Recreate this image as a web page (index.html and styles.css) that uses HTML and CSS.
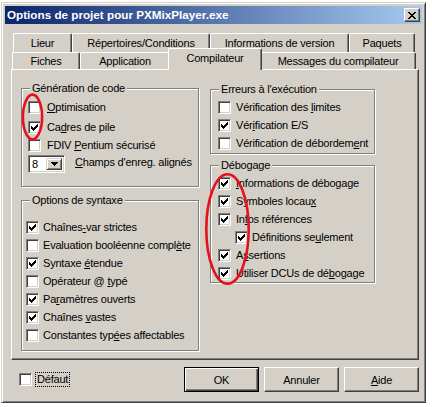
FILE: index.html
```html
<!DOCTYPE html>
<html lang="fr">
<head>
<meta charset="utf-8">
<title>Options de projet</title>
<link rel="stylesheet" href="styles.css">
</head>
<body>
<div class="window">
  <div class="titlebar">
    <span class="title">Options de projet pour PXMixPlayer.exe</span>
    <span class="close"><svg width="8" height="7" viewBox="0 0 8 7" shape-rendering="crispEdges"><path d="M0 0h2v1h-2zM6 0h2v1h-2zM1 1h2v1h-2zM5 1h2v1h-2zM2 2h4v1h-4zM3 3h2v1h-2zM2 4h4v1h-4zM1 5h2v1h-2zM5 5h2v1h-2zM0 6h2v1h-2zM6 6h2v1h-2z" fill="#000"/></svg></span>
  </div>

  <div class="tabctl">
    <div class="tabrow row1">
      <div class="tab w-lieur">Lieur</div>
      <div class="tab w-rep">Répertoires/Conditions</div>
      <div class="tab w-info">Informations de version</div>
      <div class="tab w-paq">Paquets</div>
    </div>
    <div class="tabrow row2">
      <div class="tab w-fiches">Fiches</div>
      <div class="tab w-app">Application</div>
      <div class="tab w-comp sel">Compilateur</div>
      <div class="tab w-msg">Messages du compilateur</div>
    </div>

    <div class="panel">
      <div class="col col-left">
        <div class="group g-gen">
          <div class="gtitle">Génération de code</div>
          <div class="row r-first">
            <span class="cb"></span><span class="lbl"><u>O</u>ptimisation</span>
          </div>
          <div class="row r-second">
            <span class="cb"><svg class="chk" width="7" height="7" viewBox="0 0 7 7" shape-rendering="crispEdges"><path d="M6 0h1v1h-1zM5 1h2v1h-2zM0 2h1v1h-1zM4 2h3v1h-3zM0 3h2v1h-2zM3 3h3v1h-3zM0 4h5v1h-5zM1 5h3v1h-3zM2 6h1v1h-1z" fill="#000"/></svg></span><span class="lbl">Ca<u>d</u>res de pile</span>
          </div>
          <div class="row">
            <span class="cb"></span><span class="lbl">FDIV <u>P</u>entium sécurisé</span>
          </div>
          <div class="row r-combo">
            <span class="combo"><span class="combo-val">8</span><span class="combo-btn"><svg width="7" height="4" viewBox="0 0 7 4" shape-rendering="crispEdges"><path d="M0 0h7v1h-7zM1 1h5v1h-5zM2 2h3v1h-3zM3 3h1v1h-1z" fill="#000"/></svg></span></span>
            <span class="lbl combo-lbl"><u>C</u>hamps d'enreg. alignés</span>
          </div>
        </div>

        <div class="group g-syn">
          <div class="gtitle">Options de syntaxe</div>
          <div class="rows">
            <div class="row"><span class="cb"><svg class="chk" width="7" height="7" viewBox="0 0 7 7" shape-rendering="crispEdges"><path d="M6 0h1v1h-1zM5 1h2v1h-2zM0 2h1v1h-1zM4 2h3v1h-3zM0 3h2v1h-2zM3 3h3v1h-3zM0 4h5v1h-5zM1 5h3v1h-3zM2 6h1v1h-1z" fill="#000"/></svg></span><span class="lbl">Chaînes<u>-</u>var strictes</span></div>
            <div class="row"><span class="cb"></span><span class="lbl">Evaluation booléenne compl<u>è</u>te</span></div>
            <div class="row"><span class="cb"><svg class="chk" width="7" height="7" viewBox="0 0 7 7" shape-rendering="crispEdges"><path d="M6 0h1v1h-1zM5 1h2v1h-2zM0 2h1v1h-1zM4 2h3v1h-3zM0 3h2v1h-2zM3 3h3v1h-3zM0 4h5v1h-5zM1 5h3v1h-3zM2 6h1v1h-1z" fill="#000"/></svg></span><span class="lbl">Syntaxe <u>é</u>tendue</span></div>
            <div class="row"><span class="cb"></span><span class="lbl">Opérateur @ <u>t</u>ypé</span></div>
            <div class="row"><span class="cb"><svg class="chk" width="7" height="7" viewBox="0 0 7 7" shape-rendering="crispEdges"><path d="M6 0h1v1h-1zM5 1h2v1h-2zM0 2h1v1h-1zM4 2h3v1h-3zM0 3h2v1h-2zM3 3h3v1h-3zM0 4h5v1h-5zM1 5h3v1h-3zM2 6h1v1h-1z" fill="#000"/></svg></span><span class="lbl">Pa<u>r</u>amètres ouverts</span></div>
            <div class="row"><span class="cb"><svg class="chk" width="7" height="7" viewBox="0 0 7 7" shape-rendering="crispEdges"><path d="M6 0h1v1h-1zM5 1h2v1h-2zM0 2h1v1h-1zM4 2h3v1h-3zM0 3h2v1h-2zM3 3h3v1h-3zM0 4h5v1h-5zM1 5h3v1h-3zM2 6h1v1h-1z" fill="#000"/></svg></span><span class="lbl">Chaînes <u>v</u>astes</span></div>
            <div class="row"><span class="cb"></span><span class="lbl">Constantes typ<u>é</u>es affectables</span></div>
          </div>
        </div>
      </div>

      <div class="col col-right">
        <div class="group g-err">
          <div class="gtitle">Erreurs à l'exécution</div>
          <div class="rows">
            <div class="row"><span class="cb"></span><span class="lbl">Vérification des <u>l</u>imites</span></div>
            <div class="row"><span class="cb"><svg class="chk" width="7" height="7" viewBox="0 0 7 7" shape-rendering="crispEdges"><path d="M6 0h1v1h-1zM5 1h2v1h-2zM0 2h1v1h-1zM4 2h3v1h-3zM0 3h2v1h-2zM3 3h3v1h-3zM0 4h5v1h-5zM1 5h3v1h-3zM2 6h1v1h-1z" fill="#000"/></svg></span><span class="lbl">Vér<u>i</u>fication E/S</span></div>
            <div class="row"><span class="cb"></span><span class="lbl">Vérification de débordem<u>e</u>nt</span></div>
          </div>
        </div>

        <div class="group g-dbg">
          <div class="gtitle">Débogage</div>
          <div class="rows">
            <div class="row"><span class="cb"><svg class="chk" width="7" height="7" viewBox="0 0 7 7" shape-rendering="crispEdges"><path d="M6 0h1v1h-1zM5 1h2v1h-2zM0 2h1v1h-1zM4 2h3v1h-3zM0 3h2v1h-2zM3 3h3v1h-3zM0 4h5v1h-5zM1 5h3v1h-3zM2 6h1v1h-1z" fill="#000"/></svg></span><span class="lbl"><u>I</u>nformations de débogage</span></div>
            <div class="row"><span class="cb"><svg class="chk" width="7" height="7" viewBox="0 0 7 7" shape-rendering="crispEdges"><path d="M6 0h1v1h-1zM5 1h2v1h-2zM0 2h1v1h-1zM4 2h3v1h-3zM0 3h2v1h-2zM3 3h3v1h-3zM0 4h5v1h-5zM1 5h3v1h-3zM2 6h1v1h-1z" fill="#000"/></svg></span><span class="lbl">Symboles locau<u>x</u></span></div>
            <div class="row"><span class="cb"><svg class="chk" width="7" height="7" viewBox="0 0 7 7" shape-rendering="crispEdges"><path d="M6 0h1v1h-1zM5 1h2v1h-2zM0 2h1v1h-1zM4 2h3v1h-3zM0 3h2v1h-2zM3 3h3v1h-3zM0 4h5v1h-5zM1 5h3v1h-3zM2 6h1v1h-1z" fill="#000"/></svg></span><span class="lbl">In<u>f</u>os références</span></div>
            <div class="row sub"><span class="cb"><svg class="chk" width="7" height="7" viewBox="0 0 7 7" shape-rendering="crispEdges"><path d="M6 0h1v1h-1zM5 1h2v1h-2zM0 2h1v1h-1zM4 2h3v1h-3zM0 3h2v1h-2zM3 3h3v1h-3zM0 4h5v1h-5zM1 5h3v1h-3zM2 6h1v1h-1z" fill="#000"/></svg></span><span class="lbl">Définitions se<u>u</u>lement</span></div>
            <div class="row"><span class="cb"><svg class="chk" width="7" height="7" viewBox="0 0 7 7" shape-rendering="crispEdges"><path d="M6 0h1v1h-1zM5 1h2v1h-2zM0 2h1v1h-1zM4 2h3v1h-3zM0 3h2v1h-2zM3 3h3v1h-3zM0 4h5v1h-5zM1 5h3v1h-3zM2 6h1v1h-1z" fill="#000"/></svg></span><span class="lbl">A<u>s</u>sertions</span></div>
            <div class="row"><span class="cb"><svg class="chk" width="7" height="7" viewBox="0 0 7 7" shape-rendering="crispEdges"><path d="M6 0h1v1h-1zM5 1h2v1h-2zM0 2h1v1h-1zM4 2h3v1h-3zM0 3h2v1h-2zM3 3h3v1h-3zM0 4h5v1h-5zM1 5h3v1h-3zM2 6h1v1h-1z" fill="#000"/></svg></span><span class="lbl">Utiliser DCUs de dé<u>b</u>ogage</span></div>
          </div>
        </div>
      </div>
    </div>
  </div>

  <div class="footer">
    <span class="cb"></span><span class="lbl focus">Défaut</span>
    <span class="btn default btn-ok">OK</span>
    <span class="btn">Annuler</span>
    <span class="btn"><u>A</u>ide</span>
  </div>

  <svg class="annot" width="432" height="407" viewBox="0 0 432 407">
    <ellipse cx="32.5" cy="117" rx="9.6" ry="22.4" fill="none" stroke="#e4121c" stroke-width="2.6"/>
    <ellipse cx="227.5" cy="229" rx="21.2" ry="54.8" fill="none" stroke="#e4121c" stroke-width="2.6"/>
  </svg>
</div>
</body>
</html>
```

FILE: styles.css
```css
html, body {
  margin: 0;
  padding: 0;
  background: #ffffff;
}

body {
  font-family: "Liberation Sans", Arial, sans-serif;
  font-size: 11px;
  letter-spacing: -0.2px;
  color: #000;
}

u {
  text-decoration: underline;
  text-underline-offset: 1px;
}

.window {
  position: relative;
  box-sizing: border-box;
  width: 425px;
  height: 401px;
  margin: 2px 0 0 1px;
  padding: 3px;
  background: #d4d0c8;
  border: 1px solid;
  border-color: #d4d0c8 #404040 #404040 #d4d0c8;
  box-shadow: inset 1px 1px #ffffff, inset -1px -1px #808080;
}

/* Title bar */
.titlebar {
  height: 18px;
  display: flex;
  align-items: center;
  justify-content: space-between;
  padding: 0 2px;
  background: linear-gradient(to right, #0a246a, #a6caf0);
  color: #fff;
  font-weight: bold;
  font-size: 11.7px;
  letter-spacing: 0;
}

.title {
  line-height: 18px;
}

.close {
  box-sizing: border-box;
  width: 16px;
  height: 14px;
  display: flex;
  align-items: center;
  justify-content: center;
  background: #d4d0c8;
  border: 1px solid;
  border-color: #ffffff #404040 #404040 #ffffff;
  box-shadow: inset -1px -1px #808080;
}

/* Tab control */
.tabctl {
  margin: 9px 3px 0 6px;
}

.tabrow {
  display: flex;
}

.row1 {
  height: 19px;
  padding-left: 2px;
}

.row2 {
  height: 17px;
  padding-left: 1px;
}

.tab {
  box-sizing: border-box;
  height: 100%;
  display: flex;
  align-items: center;
  justify-content: center;
  border-left: 1px solid #ffffff;
  border-top: 1px solid #ffffff;
  border-right: 1px solid #404040;
  border-radius: 2px 2px 0 0;
  box-shadow: inset -1px 0 #808080;
  background: #d4d0c8;
  white-space: nowrap;
}

.w-lieur { width: 59px; }
.w-rep { width: 138px; }
.w-info { width: 139px; }
.w-paq { width: 66px; }

.w-fiches { width: 68px; }
.w-app { width: 90px; }
.w-comp { width: 90px; }
.w-msg { width: 156px; }

.tab.sel {
  position: relative;
  z-index: 1;
  align-self: flex-start;
  height: 22px;
  margin: -4px -2px 0;
  width: 94px;
  padding-bottom: 3px;
}

.panel {
  box-sizing: border-box;
  height: 291px;
  display: flex;
  gap: 11px;
  padding: 18px 0 0 9px;
  border: 1px solid;
  border-color: #ffffff #404040 #404040 #ffffff;
  box-shadow: inset -1px -1px #808080;
}

.col {
  display: flex;
  flex-direction: column;
}

.col-left { width: 178px; }
.col-right { width: 165px; padding-top: 1px; }

/* Group boxes */
.group {
  box-sizing: border-box;
  border: 1px solid #808080;
  box-shadow: inset 1px 1px #ffffff, 1px 1px #ffffff;
}

.gtitle {
  width: fit-content;
  height: 13px;
  line-height: 13px;
  margin: -7px 0 0 8px;
  padding: 0 2px;
  background: #d4d0c8;
  white-space: nowrap;
}

.g-gen { height: 99px; }
.g-syn { height: 151px; margin-top: 13px; }
.g-err { height: 65px; }
.g-dbg { height: 118px; margin-top: 11px; }

.row {
  display: flex;
  align-items: center;
  height: 18px;
  white-space: nowrap;
}

.lbl {
  line-height: 13px;
}

/* checkbox */
.cb {
  box-sizing: border-box;
  flex: none;
  width: 13px;
  height: 13px;
  display: flex;
  align-items: center;
  justify-content: center;
  background: #ffffff;
  border: 1px solid;
  border-color: #808080 #ffffff #ffffff #808080;
  box-shadow: inset 1px 1px #404040, inset -1px -1px #d4d0c8;
}

.chk { display: block; }

.g-gen .cb { margin: 0 6px 0 6px; }
.g-gen .r-first { margin-top: 3px; }
.g-gen .r-second { margin-top: 2px; }

.g-gen .r-combo {
  margin-top: 1px;
  align-items: flex-start;
}

.combo {
  box-sizing: border-box;
  display: flex;
  width: 37px;
  height: 18px;
  margin: 0 10px 0 6px;
  background: #ffffff;
  border: 1px solid;
  border-color: #808080 #ffffff #ffffff #808080;
  box-shadow: inset 1px 1px #404040, inset -1px -1px #d4d0c8;
  padding: 2px;
}

.combo-val {
  flex: 1;
  line-height: 12px;
  padding-left: 1px;
}

.combo-btn {
  box-sizing: border-box;
  width: 16px;
  height: 12px;
  display: flex;
  align-items: center;
  justify-content: center;
  background: #d4d0c8;
  border: 1px solid;
  border-color: #d4d0c8 #404040 #404040 #d4d0c8;
  box-shadow: inset 1px 1px #ffffff, inset -1px -1px #808080;
}

.combo-lbl { margin-top: 1px; }

.g-syn .rows { margin-top: 11px; }
.g-syn .cb { margin: 0 4px 0 4px; }

.g-err .rows { margin-top: 2px; }
.g-err .cb { margin: 0 5px 0 7px; }

.g-dbg .rows { margin-top: 2px; }
.g-dbg .cb { margin: 0 5px 0 7px; }
.g-dbg .sub .cb { margin: 0 4px 0 24px; }

/* Footer */
.footer {
  display: flex;
  align-items: center;
  height: 25px;
  margin: 7px 3px 0 0;
}

.footer .cb { margin-left: 14px; }

.focus {
  margin-left: 3px;
  padding: 0 1px;
  border: 1px dotted #000;
  line-height: 13px;
}

.btn {
  box-sizing: border-box;
  width: 75px;
  height: 25px;
  display: flex;
  align-items: center;
  justify-content: center;
  margin-left: 5px;
  border: 1px solid;
  border-color: #ffffff #404040 #404040 #ffffff;
  box-shadow: inset -1px -1px #808080;
}

.btn-ok { margin-left: auto; }

.btn.default {
  border: 1px solid #000;
  box-shadow: inset 1px 1px #ffffff, inset -1px -1px #404040, inset -2px -2px #808080;
}

.annot {
  position: absolute;
  left: -2px;
  top: -3px;
  pointer-events: none;
}
```
